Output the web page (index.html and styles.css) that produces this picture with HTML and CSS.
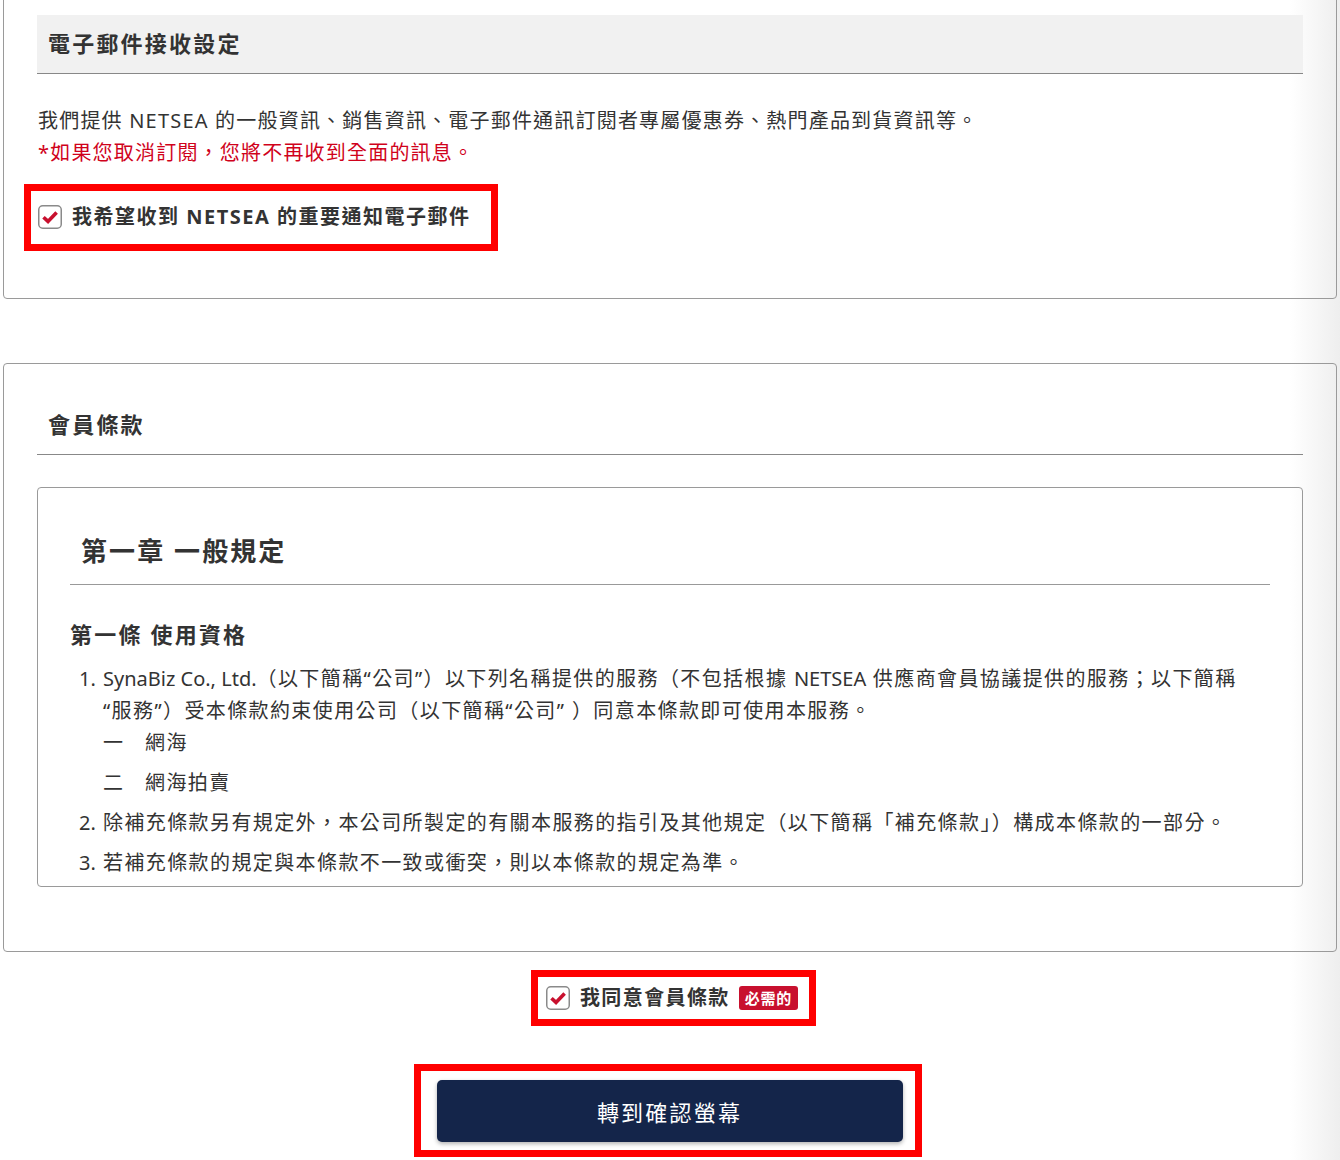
FILE: index.html
```html
<!DOCTYPE html>
<html lang="zh-Hant">
<head>
<meta charset="utf-8">
<title>會員登錄</title>
<link rel="stylesheet" href="styles.css">
</head>
<body>
<div class="page">
  <section class="card card-mail">
    <h2 class="card-head card-head-gray">電子郵件接收設定</h2>
    <p class="desc">我們提供 NETSEA 的一般資訊、銷售資訊、電子郵件通訊訂閱者專屬優惠券、熱門產品到貨資訊等。<br><span class="warn">*如果您取消訂閱，您將不再收到全面的訊息。</span></p>
    <label class="check mark-box mail-check">
      <svg class="cb" width="24" height="24" viewBox="0 0 24 24"><rect x="0.75" y="0.75" width="22.5" height="22.5" rx="4" fill="#fff" stroke="#8a8a8a" stroke-width="1.5"/><path d="M5.5 12.2 L10 16.4 L18.6 7.4" fill="none" stroke="#c8102e" stroke-width="3.6" stroke-linejoin="miter"/></svg>
      <span class="check-label">我希望收到 NETSEA 的重要通知電子郵件</span>
    </label>
  </section>

  <section class="card card-terms">
    <h2 class="card-head">會員條款</h2>
    <div class="terms-box">
      <h3 class="chapter">第一章 一般規定</h3>
      <h4 class="article">第一條 使用資格</h4>
      <ol class="items">
        <li class="item"><span class="num">1.</span><div class="item-body"><span class="en">SynaBiz Co., Ltd.</span>（以下簡稱“公司”）以下列名稱提供的服務（不包括根據 <span class="en">NETSEA</span> 供應商會員協議提供的服務；以下簡稱<span class="nw">“服務”）</span>受本條款約束使用公司（以下簡稱“公司” ）同意本條款即可使用本服務。
          <ul class="subs">
            <li class="sub"><span class="sub-num">一</span><span>網海</span></li>
            <li class="sub"><span class="sub-num">二</span><span>網海拍賣</span></li>
          </ul>
        </div></li>
        <li class="item"><span class="num">2.</span><div class="item-body">除補充條款另有規定外，本公司所製定的有關本服務的指引及其他規定（以下簡稱「補充條款」）構成本條款的一部分。</div></li>
        <li class="item"><span class="num">3.</span><div class="item-body">若補充條款的規定與本條款不一致或衝突，則以本條款的規定為準。</div></li>
      </ol>
    </div>
  </section>

  <div class="agree-row">
    <label class="check mark-box agree-check">
      <svg class="cb" width="24" height="24" viewBox="0 0 24 24"><rect x="0.75" y="0.75" width="22.5" height="22.5" rx="4" fill="#fff" stroke="#8a8a8a" stroke-width="1.5"/><path d="M5.5 12.2 L10 16.4 L18.6 7.4" fill="none" stroke="#c8102e" stroke-width="3.6" stroke-linejoin="miter"/></svg>
      <span class="check-label">我同意會員條款</span>
      <span class="badge">必需的</span>
    </label>
  </div>

  <div class="submit-row">
    <div class="mark-box submit-mark">
      <button class="submit" type="button">轉到確認螢幕</button>
    </div>
  </div>
</div>
</body>
</html>
```

FILE: styles.css
```css
* { box-sizing: border-box; }
html, body { margin: 0; padding: 0; }
body {
  font-family: "Noto Sans", "Noto Sans CJK JP", "Noto Sans CJK TC", sans-serif;
  color: #333;
  font-size: 20px;
  letter-spacing: 0.05em;
  background: linear-gradient(to right, #fff 0, #fff calc(100% - 50px), #eeeeee 100%);
  min-height: 1160px;
  overflow: hidden;
}
.page {
  margin-top: -20px;
  padding: 0 3px;
}
.card {
  border: 1px solid #9a9a9a;
  border-radius: 4px;
  padding: 34px 33px 47px;
}
.card-terms {
  margin-top: 64px;
  padding: 32px 33px 64px;
}
.card-head {
  margin: 0;
  height: 59px;
  display: flex;
  align-items: center;
  padding: 0 0 4px 11px;
  font-size: 22px;
  font-weight: 700;
  letter-spacing: 0.1em;
  border-bottom: 1px solid #888;
  color: #333;
}
.card-head-gray { background: #f1f1f1; }
.desc {
  margin: 31px 0 15px 1px;
  line-height: 32px;
  letter-spacing: 0.06em;
}
.warn { color: #d0021b; }
.mark-box { border: 7px solid #ff0000; }
.check {
  display: inline-flex;
  align-items: center;
  gap: 10px;
  line-height: 32px;
  font-weight: 700;
}
.mail-check {
  margin-left: -13px;
  padding: 10px 21px 11px 7px;
  letter-spacing: 0.075em;
}
.cb { flex: none; display: block; }
.terms-box {
  margin-top: 32px;
  height: 400px;
  overflow: hidden;
  border: 1px solid #9a9a9a;
  border-radius: 4px;
  padding: 32px 32px 0;
}
.chapter {
  margin: 0;
  height: 65px;
  display: flex;
  align-items: center;
  padding: 0 0 4px 11px;
  font-size: 26px;
  font-weight: 700;
  letter-spacing: 0.08em;
  border-bottom: 1px solid #999;
}
.article {
  margin: 33px 0 0;
  font-size: 22px;
  line-height: 32px;
  font-weight: 700;
  letter-spacing: 0.1em;
}
.items {
  list-style: none;
  margin: 13px 0 0;
  padding: 0 0 0 9px;
  letter-spacing: 0.07em;
}
.en { letter-spacing: 0; }
.nw { white-space: nowrap; }
.item {
  display: flex;
  line-height: 32px;
}
.item + .item { margin-top: 8px; }
.num { flex: none; width: 24px; letter-spacing: 0; }
.item-body { flex: 1; }
.subs { list-style: none; margin: 0; padding: 0; }
.sub { display: flex; }
.sub + .sub { margin-top: 8px; }
.sub-num { width: 42px; flex: none; }
.agree-row {
  display: flex;
  justify-content: center;
  margin-top: 18px;
  padding-left: 7px;
}
.agree-check {
  padding: 5px 11px 5px 8px;
  letter-spacing: 0.07em;
}
.badge {
  background: #c8102e;
  color: #fff;
  font-size: 15px;
  line-height: 20px;
  padding: 2px 6px;
  border-radius: 3px;
  letter-spacing: 0.05em;
  margin-left: -1px;
}
.submit-row {
  display: flex;
  justify-content: center;
  margin-top: 38px;
  padding-right: 5px;
}
.submit-mark {
  padding: 9px 12px 8px 16px;
}
.submit {
  display: block;
  width: 466px;
  height: 62px;
  border: 0;
  border-radius: 5px;
  background: #14254a;
  color: #fff;
  font-family: inherit;
  font-size: 22px;
  letter-spacing: 0.1em;
  box-shadow: 0 2px 4px rgba(0,0,0,0.3);
  cursor: pointer;
}
```
